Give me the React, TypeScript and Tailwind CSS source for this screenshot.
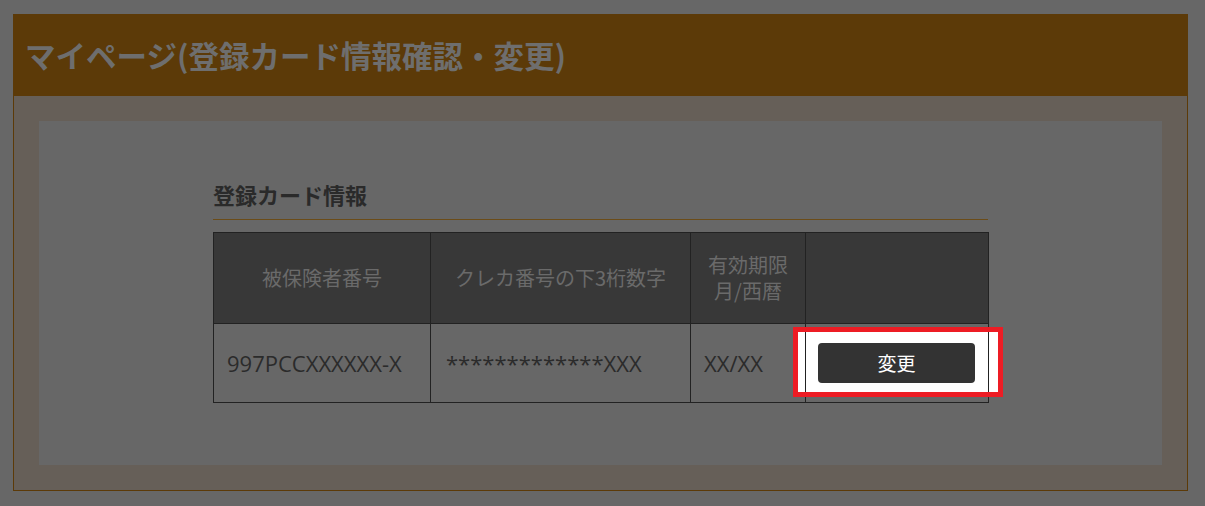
import React from 'react';

const headers = ['被保険者番号', 'クレカ番号の下3桁数字', '有効期限月/西暦', ''];

export default function App() {
  return (
    <div
      className="min-h-[506px] w-full bg-[#676767] pt-[14px] pl-[13px]"
      style={{ fontFamily: '"Open Sans", "Noto Sans CJK JP", sans-serif' }}
    >
      <div className="w-[1175px]">
        <div className="h-[82px] bg-[#5c3a08] flex items-center px-[12px]">
          <h1
            className="text-[30.5px] font-bold text-[#6e6e6e] leading-none"
            style={{ fontFamily: '"Noto Sans CJK JP", sans-serif' }}
          >
            マイページ(登録カード情報確認・変更)
          </h1>
        </div>

        <div className="bg-[#665f58] border border-t-0 border-[#5c3a08] p-[25px]">
          <div className="bg-[#676767] h-[344px] pt-[57px]">
            <div className="w-[775px] mx-auto">
              <h2
                className="text-[22px] font-bold text-[#2a2a2a] leading-[33px] pb-[8px] border-b border-[#6b4c18] mb-[12px]"
                style={{ fontFamily: '"Noto Sans CJK JP", sans-serif' }}
              >
                登録カード情報
              </h2>

              <div className="relative">
                {/* spotlight behind the table lines */}
                <div className="absolute left-[580px] top-[95px] w-[210px] h-[70px] bg-white z-0" />

                <table className="relative z-10 w-[775px] border-collapse table-fixed">
                  <colgroup>
                    <col className="w-[217px]" />
                    <col className="w-[260px]" />
                    <col className="w-[115px]" />
                    <col className="w-[183px]" />
                  </colgroup>
                  <thead>
                    <tr className="h-[91px] bg-[#383838]">
                      {headers.map((h, i) => (
                        <th
                          key={i}
                          className="border border-[#222] px-[16px] text-center font-normal text-[20px] leading-[26px] text-[#6a6a6a]"
                          style={{ fontFamily: '"Noto Sans CJK JP", sans-serif' }}
                        >
                          {h}
                        </th>
                      ))}
                    </tr>
                  </thead>
                  <tbody>
                    <tr className="h-[79px]">
                      <td className="border border-[#222] pl-[13px] text-[22px] text-[#2b2b2b]">997PCCXXXXXX-X</td>
                      <td className="border border-[#222] pl-[15px] text-[22px] text-[#2b2b2b]">*************XXX</td>
                      <td className="border border-[#222] pl-[13px] text-[22px] text-[#2b2b2b]">XX/XX</td>
                      <td className="border border-[#222] pl-[12px]">
                        <button
                          className="w-[157px] h-[40px] rounded-[4px] bg-[#333] text-white text-[19px] flex items-center justify-center"
                          style={{ fontFamily: '"Noto Sans CJK JP", sans-serif' }}
                        >
                          変更
                        </button>
                      </td>
                    </tr>
                  </tbody>
                </table>

                {/* red frame over the lines */}
                <div className="absolute left-[580px] top-[95px] w-[210px] h-[70px] border-[5px] border-[#ed1c24] z-20 pointer-events-none" />
              </div>
            </div>
          </div>
        </div>
      </div>
    </div>
  );
}
